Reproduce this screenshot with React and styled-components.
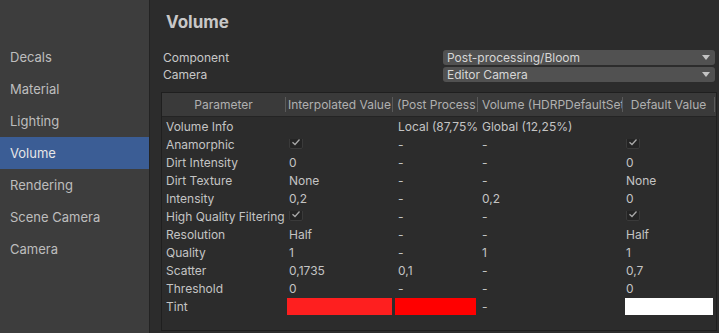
import React from "react";
import styled, { createGlobalStyle } from "styled-components";

const Global = createGlobalStyle`
  html, body { margin: 0; padding: 0; background: #2c2c2c; }
  body { font-family: Inter, "Noto Sans", "Liberation Sans", sans-serif; font-size: 12px; color: #c4c4c4; }
  * { box-sizing: border-box; }
`;

const Window = styled.div`
  display: flex;
  width: 719px;
  height: 333px;
  overflow: hidden;
`;

const Sidebar = styled.nav`
  width: 150px;
  flex: none;
  background: #3d3d3d;
  border-right: 1px solid #232323;
  padding-top: 41px;
  display: flex;
  flex-direction: column;
`;

const NavItem = styled.div`
  height: 32px;
  display: flex;
  align-items: center;
  padding-left: 10px;
  font-size: 13px;
  color: ${(p) => (p.$active ? "#e6e6e6" : "#bdbdbd")};
  background: ${(p) => (p.$active ? "#3b5d95" : "transparent")};
`;

const Main = styled.main`
  flex: 1;
  background: #2c2c2c;
  padding: 0 2px 0 11px;
  display: flex;
  flex-direction: column;
`;

const Title = styled.h1`
  margin: 0;
  padding: 9px 0 0 5px;
  height: 49px;
  font-size: 17px;
  line-height: 26px;
  font-weight: 700;
  color: #c8c8c8;
`;

const FieldRow = styled.div`
  display: flex;
  align-items: center;
  height: 17px;
  padding-left: 2px;
`;

const FieldLabel = styled.div`
  flex: 1;
  font-size: 12px;
  color: #c8c8c8;
`;

const Dropdown = styled.div`
  width: 272px;
  height: 15px;
  margin-right: 2px;
  background: #515151;
  border-radius: 3px;
  display: flex;
  align-items: center;
  justify-content: space-between;
  padding: 0 5px 0 4px;
  font-size: 12px;
  color: #d6d6d6;
`;

const Arrow = styled.span`
  width: 0;
  height: 0;
  border-left: 4px solid transparent;
  border-right: 4px solid transparent;
  border-top: 5px solid #c4c4c4;
`;

const Table = styled.div`
  margin-top: 9px;
  width: 556px;
  height: 239px;
  border: 1px solid #1f1f1f;
  background: #2c2c2c;
  display: flex;
  flex-direction: column;
`;

const COLS = "124px 107px 85px 145px 92px";

const HeaderRow = styled.div`
  display: grid;
  grid-template-columns: ${COLS};
  height: 24px;
  background: #3a3a3a;
  border-bottom: 1px solid #242424;
  align-items: center;
`;

const HeadCell = styled.div`
  height: 15px;
  line-height: 15px;
  white-space: nowrap;
  overflow: hidden;
  text-align: ${(p) => (p.$left ? "left" : "center")};
  padding-left: ${(p) => p.$pad ?? 0}px;
  border-right: 1px solid #5a5a5a;
  color: #b0b0b0;
  font-size: 12px;
`;

const Row = styled.div`
  display: grid;
  grid-template-columns: ${COLS};
  height: 18px;
  align-items: center;
`;

const Cell = styled.div`
  padding-left: ${(p) => p.$pad ?? 3}px;
  white-space: nowrap;
  overflow: hidden;
  font-size: 12px;
  color: #c4c4c4;
  display: flex;
  align-items: center;
`;

const Check = styled.span`
  width: 14px;
  height: 14px;
  margin-top: -4px;
  background: #242424;
  border: 1px solid #3a3a3a;
  border-radius: 2px;
  display: inline-flex;
  align-items: center;
  justify-content: center;
`;

const Swatch = styled.div`
  height: 17px;
  margin: 0 ${(p) => p.$mr}px 0 ${(p) => p.$ml}px;
  background: ${(p) => p.$color};
`;

const Tick = () => (
  <Check>
    <svg width="10" height="10" viewBox="0 0 10 10">
      <path d="M1.5 5.2 L4 7.5 L8.5 2.5" fill="none" stroke="#a8a8a8" strokeWidth="1.3" />
    </svg>
  </Check>
);

const rows = [
  ["Volume Info", "", "Local (87,75%", "Global (12,25%)", ""],
  ["Anamorphic", "check", "-", "-", "check"],
  ["Dirt Intensity", "0", "-", "-", "0"],
  ["Dirt Texture", "None", "-", "-", "None"],
  ["Intensity", "0,2", "-", "0,2", "0"],
  ["High Quality Filtering", "check", "-", "-", "check"],
  ["Resolution", "Half", "-", "-", "Half"],
  ["Quality", "1", "-", "1", "1"],
  ["Scatter", "0,1735", "0,1", "-", "0,7"],
  ["Threshold", "0", "-", "-", "0"],
];

const pads = [4, 3, 5, 4, 3];

const render = (v, i) => (
  <Cell key={i} $pad={pads[i]}>
    {v === "check" ? <Tick /> : v}
  </Cell>
);

export default function App() {
  const nav = ["Decals", "Material", "Lighting", "Volume", "Rendering", "Scene Camera", "Camera"];
  return (
    <>
      <Global />
      <Window>
        <Sidebar>
          {nav.map((n) => (
            <NavItem key={n} $active={n === "Volume"}>{n}</NavItem>
          ))}
        </Sidebar>
        <Main>
          <Title>Volume</Title>
          <FieldRow>
            <FieldLabel>Component</FieldLabel>
            <Dropdown>Post-processing/Bloom<Arrow /></Dropdown>
          </FieldRow>
          <FieldRow>
            <FieldLabel>Camera</FieldLabel>
            <Dropdown>Editor Camera<Arrow /></Dropdown>
          </FieldRow>
          <Table>
            <HeaderRow>
              <HeadCell>Parameter</HeadCell>
              <HeadCell $left $pad={2}>Interpolated Value</HeadCell>
              <HeadCell $left $pad={4}>(Post Process</HeadCell>
              <HeadCell $left $pad={4}>Volume (HDRPDefaultSettings)</HeadCell>
              <HeadCell>Default Value</HeadCell>
            </HeaderRow>
            {rows.map((r) => (
              <Row key={r[0]}>{r.map(render)}</Row>
            ))}
            <Row>
              <Cell $pad={4}>Tint</Cell>
              <Swatch $color="#fe1f1f" $ml={1} $mr={1} />
              <Swatch $color="#ff0000" $ml={2} $mr={2} />
              <Cell $pad={4}>-</Cell>
              <Swatch $color="#ffffff" $ml={2} $mr={2} />
            </Row>
          </Table>
        </Main>
      </Window>
    </>
  );
}
